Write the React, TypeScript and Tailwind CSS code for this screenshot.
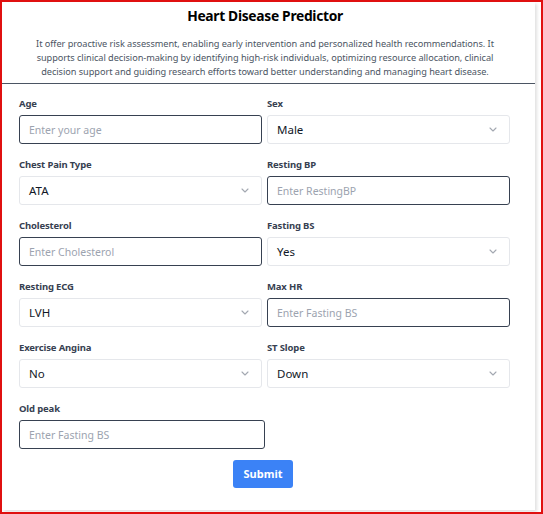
import React from "react";

const font = { fontFamily: '"Noto Sans", "Open Sans", sans-serif' };

function Chevron() {
  return (
    <svg width="8" height="5" viewBox="0 0 8 5" fill="none" className="shrink-0">
      <path d="M1 1l3 3 3-3" stroke="#a3a8b1" strokeWidth="1.1" strokeLinecap="round" strokeLinejoin="round" />
    </svg>
  );
}

function Field({ label, children }: { label: string; children: React.ReactNode }) {
  return (
    <div className="flex flex-col">
      <label className="h-[12px] whitespace-nowrap text-[9.5px] leading-[12px] font-bold tracking-[-0.15px] text-[#374151]">{label}</label>
      <div className="mt-[5px]">{children}</div>
    </div>
  );
}

function TextInput({ placeholder, wide }: { placeholder: string; wide?: boolean }) {
  return (
    <input
      placeholder={placeholder}
      className={`${wide ? "w-[246px]" : "w-[243px]"} h-[29px] rounded-[3px] border border-[#374151] px-[9px] text-[10.5px] text-gray-900 placeholder:text-[#9ca3af] outline-none`}
      style={font}
    />
  );
}

function SelectBox({ value }: { value: string }) {
  return (
    <div className="flex h-[29px] w-[243px] items-center justify-between rounded-[3px] border border-[#e5e7eb] pl-[9px] pr-[12px] text-[11.5px] text-[#111827]">
      <span>{value}</span>
      <Chevron />
    </div>
  );
}

export default function App() {
  return (
    <div className="h-[514px] w-[543px] overflow-hidden border-2 border-[#e01010] bg-white" style={font}>
      <div className="h-[508px] w-[533px] bg-white shadow-[2px_2px_3px_rgba(0,0,0,0.12)]">
        <div className="border-b border-[#4b5563] pb-[4px]">
          <div className="w-[526px]">
            <h1 className="pt-[4px] text-center text-[13.8px] leading-[20px] font-bold tracking-[-0.3px] text-black">Heart Disease Predictor</h1>
            <p className="mt-[11px] whitespace-nowrap text-center text-[9.2px] leading-[14px] tracking-[-0.05px] text-[#4b5563]">
              It offer proactive risk assessment, enabling early intervention and personalized health recommendations. It
              <br />
              supports clinical decision-making by identifying high-risk individuals, optimizing resource allocation, clinical
              <br />
              decision support and guiding research efforts toward better understanding and managing heart disease.
            </p>
          </div>
        </div>
        <form className="px-[17px] pt-[14px]" onSubmit={(e) => e.preventDefault()}>
          <div className="grid grid-cols-[243px_243px] gap-x-[5px] gap-y-[15px]">
            <Field label="Age"><TextInput placeholder="Enter your age" /></Field>
            <Field label="Sex"><SelectBox value="Male" /></Field>
            <Field label="Chest Pain Type"><SelectBox value="ATA" /></Field>
            <Field label="Resting BP"><TextInput placeholder="Enter RestingBP" /></Field>
            <Field label="Cholesterol"><TextInput placeholder="Enter Cholesterol" /></Field>
            <Field label="Fasting BS"><SelectBox value="Yes" /></Field>
            <Field label="Resting ECG"><SelectBox value="LVH" /></Field>
            <Field label="Max HR"><TextInput placeholder="Enter Fasting BS" /></Field>
            <Field label="Exercise Angina"><SelectBox value="No" /></Field>
            <Field label="ST Slope"><SelectBox value="Down" /></Field>
            <Field label="Old peak"><TextInput placeholder="Enter Fasting BS" wide /></Field>
          </div>
          <div className="mt-[11px] flex pl-[214px]">
            <button type="submit" className="h-[28px] w-[60px] rounded-[3px] bg-[#3b82f6] text-[11px] font-bold text-white">
              Submit
            </button>
          </div>
        </form>
      </div>
    </div>
  );
}
